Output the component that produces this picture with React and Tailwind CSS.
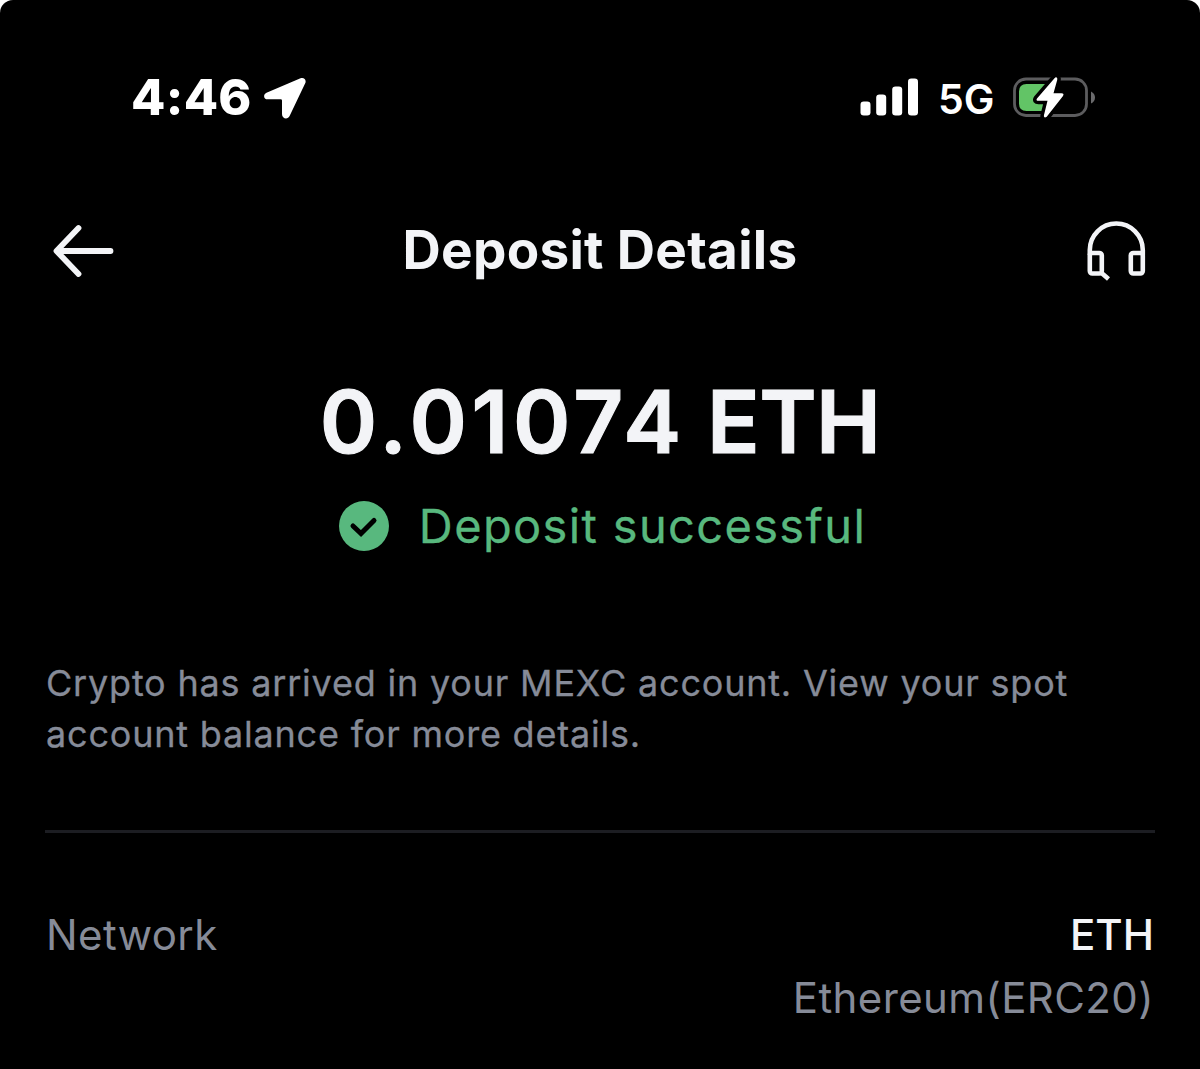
function StatusBar() {
  return (
    <div className="flex h-[68px] items-center pl-[131px] pr-[105px] text-white">
      <span className="w-[120px] text-[50px] leading-[50px] font-extrabold tracking-[0.300px]">4:46</span>
      <svg className="ml-[13px] mt-[3px] h-[44px] w-[44px]" viewBox="0 0 44 44" fill="currentColor">
        <path d="M36.500 1.300 2.500 15.700C-1.200 17.500-.5 22.300 3.700 22.300H16.700Q18 22.300 18 23.600V37C18 42 23.800 43 25.600 39L41.200 6.300C42.800 2.800 39.800-.1 36.500 1.300Z" />
      </svg>
      <svg className="ml-auto h-[38px] w-[58px]" viewBox="0 0 58 38" fill="currentColor">
        <rect x=".5" y="23.500" width="10" height="14" rx="3.300" />
        <rect x="16.200" y="16.500" width="10" height="21" rx="3.300" />
        <rect x="32.200" y="8.500" width="10" height="29" rx="3.300" />
        <rect x="48" y=".5" width="10" height="37" rx="3.300" />
      </svg>
      <span className="ml-[20px] mt-[3px] w-[75px] text-[41px] leading-[42px] font-semibold">5G</span>
      <svg className="h-[44px] w-[82px]" viewBox="0 0 82 44">
        <rect x="1.500" y="4" width="72" height="36.500" rx="11.500" fill="none" stroke="#5c5c5e" strokeWidth="2.800" />
        <path d="M78 16.500V28.500Q82 26.500 82 22.500T78 16.500Z" fill="#6a6a6c" />
        <path d="M13.500 9H37V36H13.500Q6 36 6 28.500V16.500Q6 9 13.500 9Z" fill="#62c466" />
        <path d="M41.500 3.200 24 23.500Q22.500 25.800 25.500 25.800H34.500L31 40C30.300 42.800 32.700 43.300 34.300 41L50 21Q51.500 18.500 48.500 18.300H40.500L44.200 5C44.800 2.500 43 1.500 41.500 3.200Z" fill="#fff" stroke="#000" strokeWidth="7" strokeLinejoin="round" paintOrder="stroke" />
      </svg>
    </div>
  );
}

function Header() {
  return (
    <header className="grid h-[70px] grid-cols-[62px_1fr_62px] items-center px-[52px]">
      <svg className="h-[54px] w-[62px]" viewBox="0 0 62 54" fill="none" stroke="currentColor" strokeWidth="5.800" strokeLinecap="round" strokeLinejoin="round">
        <path d="M26.500 5 4.500 28 26.500 51M5 28H58.500" />
      </svg>
      <h1 className="text-center text-[53px] leading-[60px] font-bold tracking-[0.300px] whitespace-nowrap">Deposit Details</h1>
      <svg className="mr-[1px] h-[62px] w-[62px] justify-self-end" viewBox="0 0 62 62" fill="none" stroke="currentColor" strokeWidth="4.600">
        <path d="M4.800 36V31a26.500 26.500 0 0 1 53 0V36" />
        <rect x="4.800" y="34" width="12" height="20.500" rx="2.500" />
        <rect x="45.800" y="34" width="12" height="20.500" rx="2.500" />
        <path d="m16 53.500 7.500 6.500" />
      </svg>
    </header>
  );
}

export default function App() {
  return (
    <div className="h-[1069px] w-[1200px] bg-white font-['Inter',sans-serif]">
      <main className="flex h-full flex-col overflow-hidden rounded-t-[13px] bg-black pt-[63px] text-[#f3f4f7]">
        <StatusBar />
        <div className="mt-[84px]"><Header /></div>
        <section className="mt-[87px] flex flex-col items-center">
          <div className="text-[87px] leading-[100px] font-semibold tracking-[-0.600px] [-webkit-text-stroke:1.100px_currentColor]">
            <span className="tracking-[4.700px]">0.01074</span> ETH
          </div>
          <div className="mt-[24px] ml-[5px] flex h-[60px] items-center gap-[30px] text-[#58b87e]">
            <svg className="h-[50px] w-[50px]" viewBox="0 0 50 50">
              <circle cx="25" cy="25" r="25" fill="currentColor" />
              <path d="m14 25 8 7.500L35 19.500" fill="none" stroke="#000" strokeWidth="5" strokeLinecap="round" />
            </svg>
            <span className="text-[47px] leading-[60px] tracking-[1.350px] [-webkit-text-stroke:0.300px_currentColor]">Deposit successful</span>
          </div>
        </section>
        <p className="mx-[46px] mt-[102px] text-[36px] leading-[51px] tracking-[0.800px] text-[#868b98] [-webkit-text-stroke:0.300px_currentColor]">
          Crypto has arrived in your MEXC account. View your spot<br />account balance for more details.
        </p>
        <div className="mx-[45px] mt-[70px] h-[3px] bg-[#1c1d22]" />
        <section className="mx-[46px] mt-[70px] flex justify-between text-[42px] leading-[63px]">
          <span className="tracking-[0.400px] text-[#868b98]">Network</span>
          <div className="flex flex-col items-end">
            <span className="font-medium">ETH</span>
            <span className="tracking-[0.400px] text-[#868b98]">Ethereum(ERC20)</span>
          </div>
        </section>
      </main>
    </div>
  );
}
